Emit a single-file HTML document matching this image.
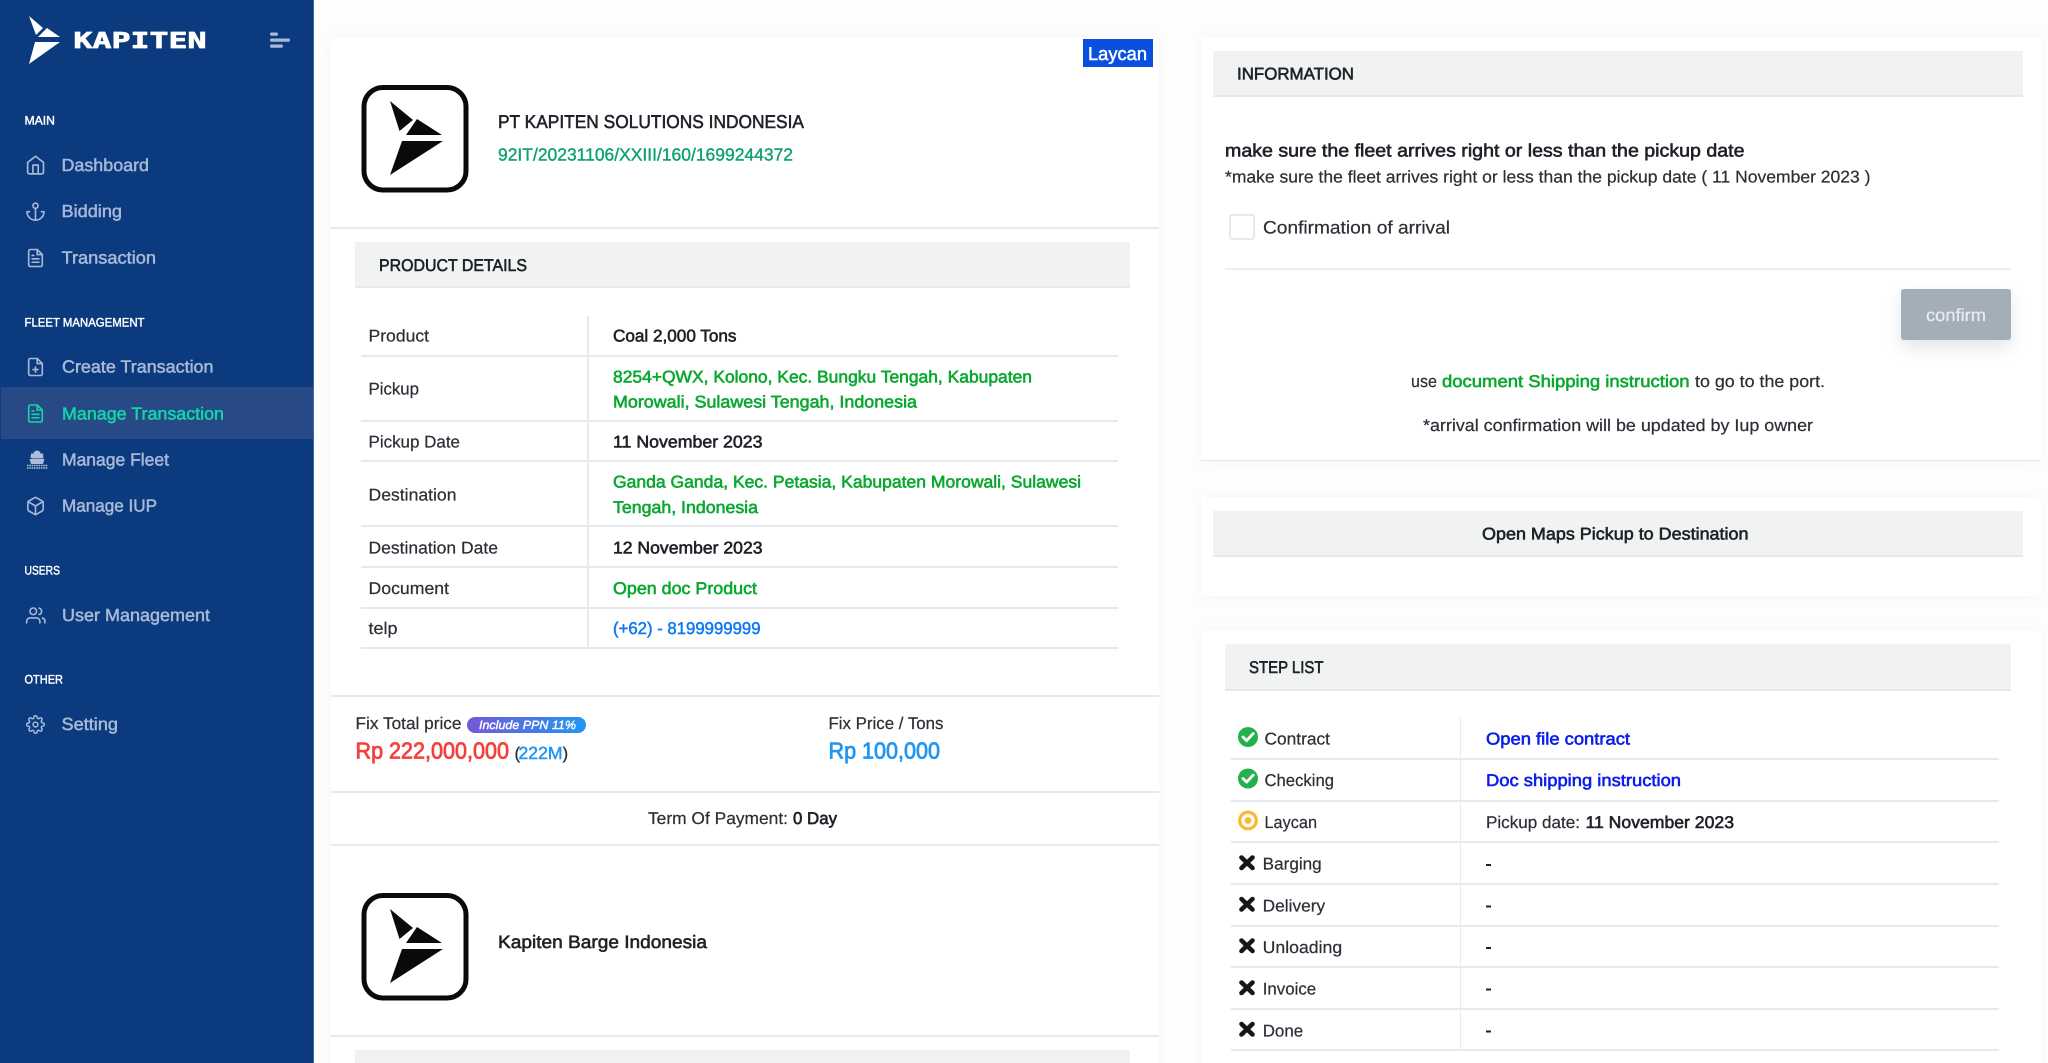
<!DOCTYPE html>
<html lang="en"><head><meta charset="utf-8"><title>Kapiten</title>
<style>
html,body{margin:0;padding:0;width:2048px;height:1063px;overflow:hidden;background:#fdfdfd;position:relative}
div{position:absolute;box-sizing:border-box}
.card{background:#fff;box-shadow:0 0 14px rgba(30,40,60,.035)}
.hd{background:#f1f3f3;border-bottom:2px solid #e6e8ee}
.l{background:#e6e9ef;height:2px}
svg{position:absolute;left:0;top:0}
text{font-family:"Liberation Sans",sans-serif;text-rendering:geometricPrecision;stroke-linejoin:round}
.ic{fill:none;stroke-width:1.9;stroke-linecap:round;stroke-linejoin:round}
</style></head><body>
<div style="left:0;top:0;width:314px;height:1063px;background:#0c3a7e;border-right:1px solid #3f6ab0"></div>
<div style="left:1px;top:387px;width:312px;height:52px;background:#274a87"></div>

<div class="card" style="left:331px;top:37px;width:828px;height:1040px;border-radius:6px 6px 0 0"></div>
<div style="left:1083px;top:39px;width:70px;height:28px;background:#0a50e0"></div>
<div class="l" style="left:331px;top:227px;width:828px"></div>
<div class="hd" style="left:355px;top:242px;width:775px;height:46px"></div>
<div class="l" style="left:331px;top:695px;width:828px"></div>
<div class="l" style="left:331px;top:791px;width:828px"></div>
<div class="l" style="left:331px;top:844px;width:828px"></div>
<div class="l" style="left:331px;top:1035px;width:828px"></div>
<div style="left:355px;top:1050px;width:775px;height:13px;background:#eff1f3"></div>
<div style="left:467px;top:717px;width:119px;height:16px;border-radius:8px;background:linear-gradient(90deg,#7558d8,#2196f3)"></div>

<div style="left:361px;top:355px;width:757px;height:2px;background:#e6e9ef"></div>
<div style="left:361px;top:420px;width:757px;height:2px;background:#e6e9ef"></div>
<div style="left:361px;top:460px;width:757px;height:2px;background:#e6e9ef"></div>
<div style="left:361px;top:525px;width:757px;height:2px;background:#e6e9ef"></div>
<div style="left:361px;top:566px;width:757px;height:2px;background:#e6e9ef"></div>
<div style="left:361px;top:607px;width:757px;height:2px;background:#e6e9ef"></div>
<div style="left:361px;top:647px;width:757px;height:2px;background:#e6e9ef"></div>
<div style="left:587px;top:316px;width:2px;height:332px;background:#e6e9ef"></div>

<div class="card" style="left:1201px;top:37px;width:840px;height:424px;border-bottom:1px solid #e4e6ea"></div>
<div class="hd" style="left:1213px;top:51px;width:810px;height:46px"></div>
<div style="left:1229px;top:214px;width:26px;height:26px;border:2px solid #e6e8ec;border-radius:3px;background:#fff"></div>
<div style="left:1225px;top:268px;width:786px;height:2px;background:#eceef0"></div>
<div style="left:1901px;top:289px;width:110px;height:51px;background:#a3aeb9;border-radius:3px;box-shadow:0 8px 16px rgba(90,100,120,.16)"></div>

<div class="card" style="left:1201px;top:497px;width:840px;height:99px"></div>
<div class="hd" style="left:1213px;top:511px;width:810px;height:46px"></div>

<div class="card" style="left:1201px;top:631px;width:840px;height:450px"></div>
<div class="hd" style="left:1225px;top:644px;width:786px;height:47px"></div>
<div style="left:1460px;top:718px;width:1px;height:332px;background:#e6e9ef"></div>
<div style="left:1231px;top:758px;width:768px;height:2px;background:#e6e9ef"></div>
<div style="left:1231px;top:800px;width:768px;height:2px;background:#e6e9ef"></div>
<div style="left:1231px;top:841px;width:768px;height:2px;background:#e6e9ef"></div>
<div style="left:1231px;top:883px;width:768px;height:2px;background:#e6e9ef"></div>
<div style="left:1231px;top:925px;width:768px;height:2px;background:#e6e9ef"></div>
<div style="left:1231px;top:966px;width:768px;height:2px;background:#e6e9ef"></div>
<div style="left:1231px;top:1008px;width:768px;height:2px;background:#e6e9ef"></div>
<div style="left:1231px;top:1049px;width:768px;height:2px;background:#e6e9ef"></div>

<svg width="2048" height="1063" viewBox="0 0 2048 1063" xmlns="http://www.w3.org/2000/svg">
<!-- sidebar logo -->
<g fill="#fff">
<path d="M29 16L43 28L36 35Z"/><path d="M47 28L60 37H38Z"/><path d="M35 42H60L29 64Z"/>
</g>
<text x="73.5" y="48" textLength="133" lengthAdjust="spacingAndGlyphs" font-size="22" font-weight="bold" fill="#fff" stroke="#fff" stroke-width=".7" style="font-family:'DejaVu Sans Mono',monospace">KAPITEN</text>
<g fill="#a9b9d6">
<rect x="270" y="32.5" width="8" height="3.2" rx="1.6"/><rect x="270" y="38.5" width="20" height="3.2" rx="1.6"/><rect x="270" y="44.5" width="13" height="3.2" rx="1.6"/>
</g>

<!-- sidebar labels -->
<g fill="#fff" stroke="#fff" font-size="12.3" stroke-width=".42">
<text x="24.5" y="124.7" textLength="30.5" lengthAdjust="spacingAndGlyphs">MAIN</text>
<text x="24.5" y="326.7" textLength="120" lengthAdjust="spacingAndGlyphs">FLEET MANAGEMENT</text>
<text x="24.5" y="574.7" textLength="35.5" lengthAdjust="spacingAndGlyphs">USERS</text>
<text x="24.5" y="683.7" textLength="38.5" lengthAdjust="spacingAndGlyphs">OTHER</text>
</g>
<g fill="#a7b8d8" stroke="#a7b8d8" font-size="17.5" stroke-width=".5">
<text x="61.5" y="171" textLength="87.5" lengthAdjust="spacingAndGlyphs">Dashboard</text>
<text x="61.5" y="217" textLength="60.5" lengthAdjust="spacingAndGlyphs">Bidding</text>
<text x="61.5" y="263.5" textLength="94.5" lengthAdjust="spacingAndGlyphs">Transaction</text>
<text x="62" y="372.7" textLength="151.5" lengthAdjust="spacingAndGlyphs">Create Transaction</text>
<text x="62" y="465.5" textLength="107" lengthAdjust="spacingAndGlyphs">Manage Fleet</text>
<text x="62" y="511.7" textLength="95" lengthAdjust="spacingAndGlyphs">Manage IUP</text>
<text x="62" y="621" textLength="148" lengthAdjust="spacingAndGlyphs">User Management</text>
<text x="61.5" y="730.2" textLength="56.5" lengthAdjust="spacingAndGlyphs">Setting</text>
</g>
<text x="62" y="419.3" textLength="162" lengthAdjust="spacingAndGlyphs" font-size="17.5" fill="#12d6a8" stroke="#12d6a8" stroke-width=".5">Manage Transaction</text>

<!-- sidebar icons -->
<g class="ic" stroke="#a7b8d8">
<g transform="translate(25,154.5) scale(.88)"><path d="M3 9l9-7 9 7v11a2 2 0 0 1-2 2H5a2 2 0 0 1-2-2z"/><path d="M9 22V12h6v10"/></g>
<g transform="translate(25.3,201.5) scale(.85)"><circle cx="12" cy="5" r="3"/><path d="M12 22V8"/><path d="M5 12H2a10 10 0 0 0 20 0h-3"/></g>
<g transform="translate(25.3,247.8) scale(.85)"><path d="M14 2H6a2 2 0 0 0-2 2v16a2 2 0 0 0 2 2h12a2 2 0 0 0 2-2V8z"/><path d="M14 2v6h6"/><path d="M16 13H8"/><path d="M16 17H8"/><path d="M10 9H8"/></g>
<g transform="translate(25.3,356.8) scale(.85)"><path d="M14 2H6a2 2 0 0 0-2 2v16a2 2 0 0 0 2 2h12a2 2 0 0 0 2-2V8z"/><path d="M14 2v6h6"/><path d="M12 18v-6"/><path d="M9 15h6"/></g>
<g transform="translate(25.3,403.3) scale(.85)" stroke="#12d6a8"><path d="M14 2H6a2 2 0 0 0-2 2v16a2 2 0 0 0 2 2h12a2 2 0 0 0 2-2V8z"/><path d="M14 2v6h6"/><path d="M16 13H8"/><path d="M16 17H8"/><path d="M10 9H8"/></g>
<g transform="translate(25.3,495.8) scale(.85)"><path d="M21 16V8a2 2 0 0 0-1-1.73l-7-4a2 2 0 0 0-2 0l-7 4A2 2 0 0 0 3 8v8a2 2 0 0 0 1 1.73l7 4a2 2 0 0 0 2 0l7-4A2 2 0 0 0 21 16z"/><path d="M3.27 6.96L12 12.01l8.73-5.05"/><path d="M12 22.08V12"/></g>
<g transform="translate(25.8,605.5) scale(.83)"><path d="M17 21v-2a4 4 0 0 0-4-4H5a4 4 0 0 0-4 4v2"/><circle cx="9" cy="7" r="4"/><path d="M23 21v-2a4 4 0 0 0-3-3.87"/><path d="M16 3.13a4 4 0 0 1 0 7.75"/></g>
<g transform="translate(25.9,714.9) scale(.8)"><circle cx="12" cy="12" r="3"/><path d="M19.4 15a1.65 1.65 0 0 0 .33 1.82l.06.06a2 2 0 0 1 0 2.83 2 2 0 0 1-2.83 0l-.06-.06a1.65 1.65 0 0 0-1.82-.33 1.65 1.65 0 0 0-1 1.51V21a2 2 0 0 1-2 2 2 2 0 0 1-2-2v-.09A1.65 1.65 0 0 0 9 19.4a1.65 1.65 0 0 0-1.82.33l-.06.06a2 2 0 0 1-2.83 0 2 2 0 0 1 0-2.83l.06-.06a1.65 1.65 0 0 0 .33-1.82 1.65 1.65 0 0 0-1.51-1H3a2 2 0 0 1-2-2 2 2 0 0 1 2-2h.09A1.65 1.65 0 0 0 4.6 9a1.65 1.65 0 0 0-.33-1.82l-.06-.06a2 2 0 0 1 0-2.83 2 2 0 0 1 2.83 0l.06.06a1.65 1.65 0 0 0 1.82.33H9a1.65 1.65 0 0 0 1-1.51V3a2 2 0 0 1 2-2 2 2 0 0 1 2 2v.09a1.65 1.65 0 0 0 1 1.51 1.65 1.65 0 0 0 1.82-.33l.06-.06a2 2 0 0 1 2.83 0 2 2 0 0 1 0 2.83l-.06.06a1.65 1.65 0 0 0-.33 1.82V9a1.65 1.65 0 0 0 1.51 1H21a2 2 0 0 1 2 2 2 2 0 0 1-2 2h-.09a1.65 1.65 0 0 0-1.51 1z"/></g>
</g>
<g fill="#aebcda">
<path d="M33.5 453.5a3.5 3 0 0 1 7 0h2.5l.5 4.5-2 .5H33l-2.5-.5.5-4.5z"/>
<path d="M29.5 459h15l-1.5 5H31z"/>
</g>
<path d="M27 465.5h21M27 468h21" stroke="#aebcda" stroke-width="1.5" stroke-dasharray="1.6 .7" fill="none"/>

<!-- company logo -->
<rect x="364" y="87.5" width="102" height="102.5" rx="19" fill="#fff" stroke="#0a0a0a" stroke-width="5"/>
<path d="M390 101L413 120L399.5 131Z" fill="#0a0a0a"/><path d="M417 119L442 135H406Z" fill="#0a0a0a"/><path d="M402 141H443L390 175Z" fill="#0a0a0a"/>
<g transform="translate(0,808)">
<rect x="364" y="87.5" width="102" height="102.5" rx="19" fill="#fff" stroke="#0a0a0a" stroke-width="5"/>
<path d="M390 101L413 120L399.5 131Z" fill="#0a0a0a"/><path d="M417 119L442 135H406Z" fill="#0a0a0a"/><path d="M402 141H443L390 175Z" fill="#0a0a0a"/>
</g>

<!-- left card text -->
<text x="1088" y="60" textLength="59" lengthAdjust="spacingAndGlyphs" font-size="18.5" fill="#fff" stroke="#fff" stroke-width=".5">Laycan</text>
<text x="498" y="128" textLength="306" lengthAdjust="spacingAndGlyphs" font-size="18.5" fill="#1e2228" stroke="#1e2228" stroke-width=".55">PT KAPITEN SOLUTIONS INDONESIA</text>
<text x="498" y="160.7" textLength="295" lengthAdjust="spacingAndGlyphs" font-size="17.5" fill="#0fa36b" stroke="#0fa36b" stroke-width=".4">92IT/20231106/XXIII/160/1699244372</text>
<text x="379" y="271" textLength="148" lengthAdjust="spacingAndGlyphs" font-size="17" fill="#1e2228" stroke="#1e2228" stroke-width=".6">PRODUCT DETAILS</text>

<g font-size="17" fill="#2b2f36" stroke="#2b2f36" stroke-width=".22">
<text x="368.5" y="341.5" textLength="60.5" lengthAdjust="spacingAndGlyphs">Product</text>
<text x="368.5" y="394.5" textLength="50.5" lengthAdjust="spacingAndGlyphs">Pickup</text>
<text x="368.5" y="447.5" textLength="91.5" lengthAdjust="spacingAndGlyphs">Pickup Date</text>
<text x="368.5" y="500.5" textLength="88" lengthAdjust="spacingAndGlyphs">Destination</text>
<text x="368.5" y="553.5" textLength="129.5" lengthAdjust="spacingAndGlyphs">Destination Date</text>
<text x="368.5" y="594" textLength="80.5" lengthAdjust="spacingAndGlyphs">Document</text>
<text x="368.5" y="634" textLength="29" lengthAdjust="spacingAndGlyphs">telp</text>
</g>
<g font-size="17" fill="#1e2228" stroke="#1e2228" stroke-width=".6">
<text x="613" y="341.5" textLength="123.5" lengthAdjust="spacingAndGlyphs">Coal 2,000 Tons</text>
<text x="613" y="447.5" textLength="149.5" lengthAdjust="spacingAndGlyphs">11 November 2023</text>
<text x="613" y="553.5" textLength="149.5" lengthAdjust="spacingAndGlyphs">12 November 2023</text>
</g>
<g font-size="17" fill="#0aa830" stroke="#0aa830" stroke-width=".6">
<text x="613" y="382.5" textLength="419" lengthAdjust="spacingAndGlyphs">8254+QWX, Kolono, Kec. Bungku Tengah, Kabupaten</text>
<text x="613" y="407.5" textLength="304" lengthAdjust="spacingAndGlyphs">Morowali, Sulawesi Tengah, Indonesia</text>
<text x="613" y="487.5" textLength="468" lengthAdjust="spacingAndGlyphs">Ganda Ganda, Kec. Petasia, Kabupaten Morowali, Sulawesi</text>
<text x="613" y="513" textLength="145" lengthAdjust="spacingAndGlyphs">Tengah, Indonesia</text>
<text x="613" y="594" textLength="144" lengthAdjust="spacingAndGlyphs">Open doc Product</text>
</g>
<text x="613" y="634" textLength="147.5" lengthAdjust="spacingAndGlyphs" font-size="17" fill="#0d7bf0" stroke="#0d7bf0" stroke-width=".5">(+62) - 8199999999</text>

<g font-size="17" fill="#2b2f36" stroke="#2b2f36" stroke-width=".22">
<text x="355.5" y="729" textLength="106" lengthAdjust="spacingAndGlyphs">Fix Total price</text>
<text x="828.5" y="729" textLength="115" lengthAdjust="spacingAndGlyphs">Fix Price / Tons</text>
<text x="648" y="824" textLength="140" lengthAdjust="spacingAndGlyphs">Term Of Payment:</text>
</g>
<text x="793" y="824" textLength="44" lengthAdjust="spacingAndGlyphs" font-size="17" fill="#1e2228" stroke="#1e2228" stroke-width=".65">0 Day</text>
<text x="479" y="729" textLength="97" lengthAdjust="spacingAndGlyphs" font-size="12" font-style="italic" fill="#fff" stroke="#fff" stroke-width=".4">Include PPN 11%</text>
<text x="355.5" y="758.5" textLength="153.5" lengthAdjust="spacingAndGlyphs" font-size="23" fill="#f4403c" stroke="#f4403c" stroke-width=".8">Rp 222,000,000</text>
<text x="514.5" y="759" font-size="17" fill="#2b2f36" stroke="#2b2f36" stroke-width=".3">(</text>
<text x="518.5" y="759" textLength="44" lengthAdjust="spacingAndGlyphs" font-size="17.5" fill="#2196f3" stroke="#2196f3" stroke-width=".5">222M</text>
<text x="562.5" y="759" font-size="17" fill="#2b2f36" stroke="#2b2f36" stroke-width=".3">)</text>
<text x="828.5" y="758.5" textLength="111.5" lengthAdjust="spacingAndGlyphs" font-size="23" fill="#2196f3" stroke="#2196f3" stroke-width=".8">Rp 100,000</text>
<text x="498" y="948" textLength="209" lengthAdjust="spacingAndGlyphs" font-size="18" fill="#1e2228" stroke="#1e2228" stroke-width=".6">Kapiten Barge Indonesia</text>

<!-- right: information -->
<g fill="#1e2228" stroke="#1e2228" stroke-width=".6">
<text x="1237" y="79.5" textLength="117" lengthAdjust="spacingAndGlyphs" font-size="17">INFORMATION</text>
<text x="1225" y="156.7" textLength="519.5" lengthAdjust="spacingAndGlyphs" font-size="18">make sure the fleet arrives right or less than the pickup date</text>
<text x="1482" y="539.7" textLength="266.5" lengthAdjust="spacingAndGlyphs" font-size="17">Open Maps Pickup to Destination</text>
<text x="1249" y="673" textLength="74.5" lengthAdjust="spacingAndGlyphs" font-size="17">STEP LIST</text>
</g>
<g font-size="17" fill="#2b2f36" stroke="#2b2f36" stroke-width=".22">
<text x="1225" y="182.3" textLength="645.5" lengthAdjust="spacingAndGlyphs">*make sure the fleet arrives right or less than the pickup date ( 11 November 2023 )</text>
<text x="1263" y="233.3" textLength="187" lengthAdjust="spacingAndGlyphs" font-size="18">Confirmation of arrival</text>
<text x="1411" y="387" textLength="26" lengthAdjust="spacingAndGlyphs">use</text>
<text x="1695" y="387" textLength="130" lengthAdjust="spacingAndGlyphs">to go to the port.</text>
<text x="1423" y="431" textLength="390" lengthAdjust="spacingAndGlyphs">*arrival confirmation will be updated by Iup owner</text>
</g>
<text x="1442" y="387" textLength="247.5" lengthAdjust="spacingAndGlyphs" font-size="17" fill="#0aa830" stroke="#0aa830" stroke-width=".6">document Shipping instruction</text>
<text x="1926" y="321" textLength="60" lengthAdjust="spacingAndGlyphs" font-size="17.5" fill="#e9edf1" stroke="#e9edf1" stroke-width=".25">confirm</text>

<!-- step list -->
<g font-size="17" fill="#2b2f36" stroke="#2b2f36" stroke-width=".22">
<text x="1264.5" y="744.7" textLength="65.5" lengthAdjust="spacingAndGlyphs">Contract</text>
<text x="1264.5" y="786.2" textLength="69.5" lengthAdjust="spacingAndGlyphs">Checking</text>
<text x="1264.5" y="827.8" textLength="52.5" lengthAdjust="spacingAndGlyphs">Laycan</text>
<text x="1262.7" y="869.5" textLength="59" lengthAdjust="spacingAndGlyphs">Barging</text>
<text x="1262.7" y="911.3" textLength="62.5" lengthAdjust="spacingAndGlyphs">Delivery</text>
<text x="1262.7" y="953" textLength="79.5" lengthAdjust="spacingAndGlyphs">Unloading</text>
<text x="1262.7" y="994.7" textLength="53.5" lengthAdjust="spacingAndGlyphs">Invoice</text>
<text x="1262.7" y="1036.3" textLength="40.5" lengthAdjust="spacingAndGlyphs">Done</text>
<text x="1486" y="827.8" textLength="94" lengthAdjust="spacingAndGlyphs">Pickup date:</text>
</g>
<g font-size="17" fill="#0a1eea" stroke="#0a1eea" stroke-width=".6">
<text x="1486" y="744.7" textLength="144" lengthAdjust="spacingAndGlyphs">Open file contract</text>
<text x="1486" y="786.2" textLength="195" lengthAdjust="spacingAndGlyphs">Doc shipping instruction</text>
</g>
<text x="1585.5" y="827.8" textLength="148.5" lengthAdjust="spacingAndGlyphs" font-size="17" fill="#1e2228" stroke="#1e2228" stroke-width=".6">11 November 2023</text>
<g fill="#1e2228">
<rect x="1486" y="864" width="5" height="2"/><rect x="1486" y="905.5" width="5" height="2"/><rect x="1486" y="947" width="5" height="2"/><rect x="1486" y="988.5" width="5" height="2"/><rect x="1486" y="1030.5" width="5" height="2"/>
</g>
<g>
<circle cx="1248" cy="737" r="10" fill="#23b14d"/><path d="M1243 737l3.6 3.6 6.6-7" fill="none" stroke="#fff" stroke-width="2.8" stroke-linecap="round" stroke-linejoin="round"/>
<circle cx="1248" cy="778.5" r="10" fill="#23b14d"/><path d="M1243 778.5l3.6 3.6 6.6-7" fill="none" stroke="#fff" stroke-width="2.8" stroke-linecap="round" stroke-linejoin="round"/>
<circle cx="1248" cy="820.5" r="8.3" fill="#fff" stroke="#fcb92c" stroke-width="3.2"/><circle cx="1248" cy="820.5" r="3.4" fill="#fcb92c"/>
</g>
<g stroke="#14161a" stroke-width="4.6" stroke-linecap="round" fill="none">
<path d="M1241.5 857.5l11 10.5M1252.5 857.5l-11 10.5"/>
<path d="M1241.5 899l11 10.5M1252.5 899l-11 10.5"/>
<path d="M1241.5 940.5l11 10.5M1252.5 940.5l-11 10.5"/>
<path d="M1241.5 982.5l11 10.5M1252.5 982.5l-11 10.5"/>
<path d="M1241.5 1024l11 10.5M1252.5 1024l-11 10.5"/>
</g>
</svg>
</body></html>
